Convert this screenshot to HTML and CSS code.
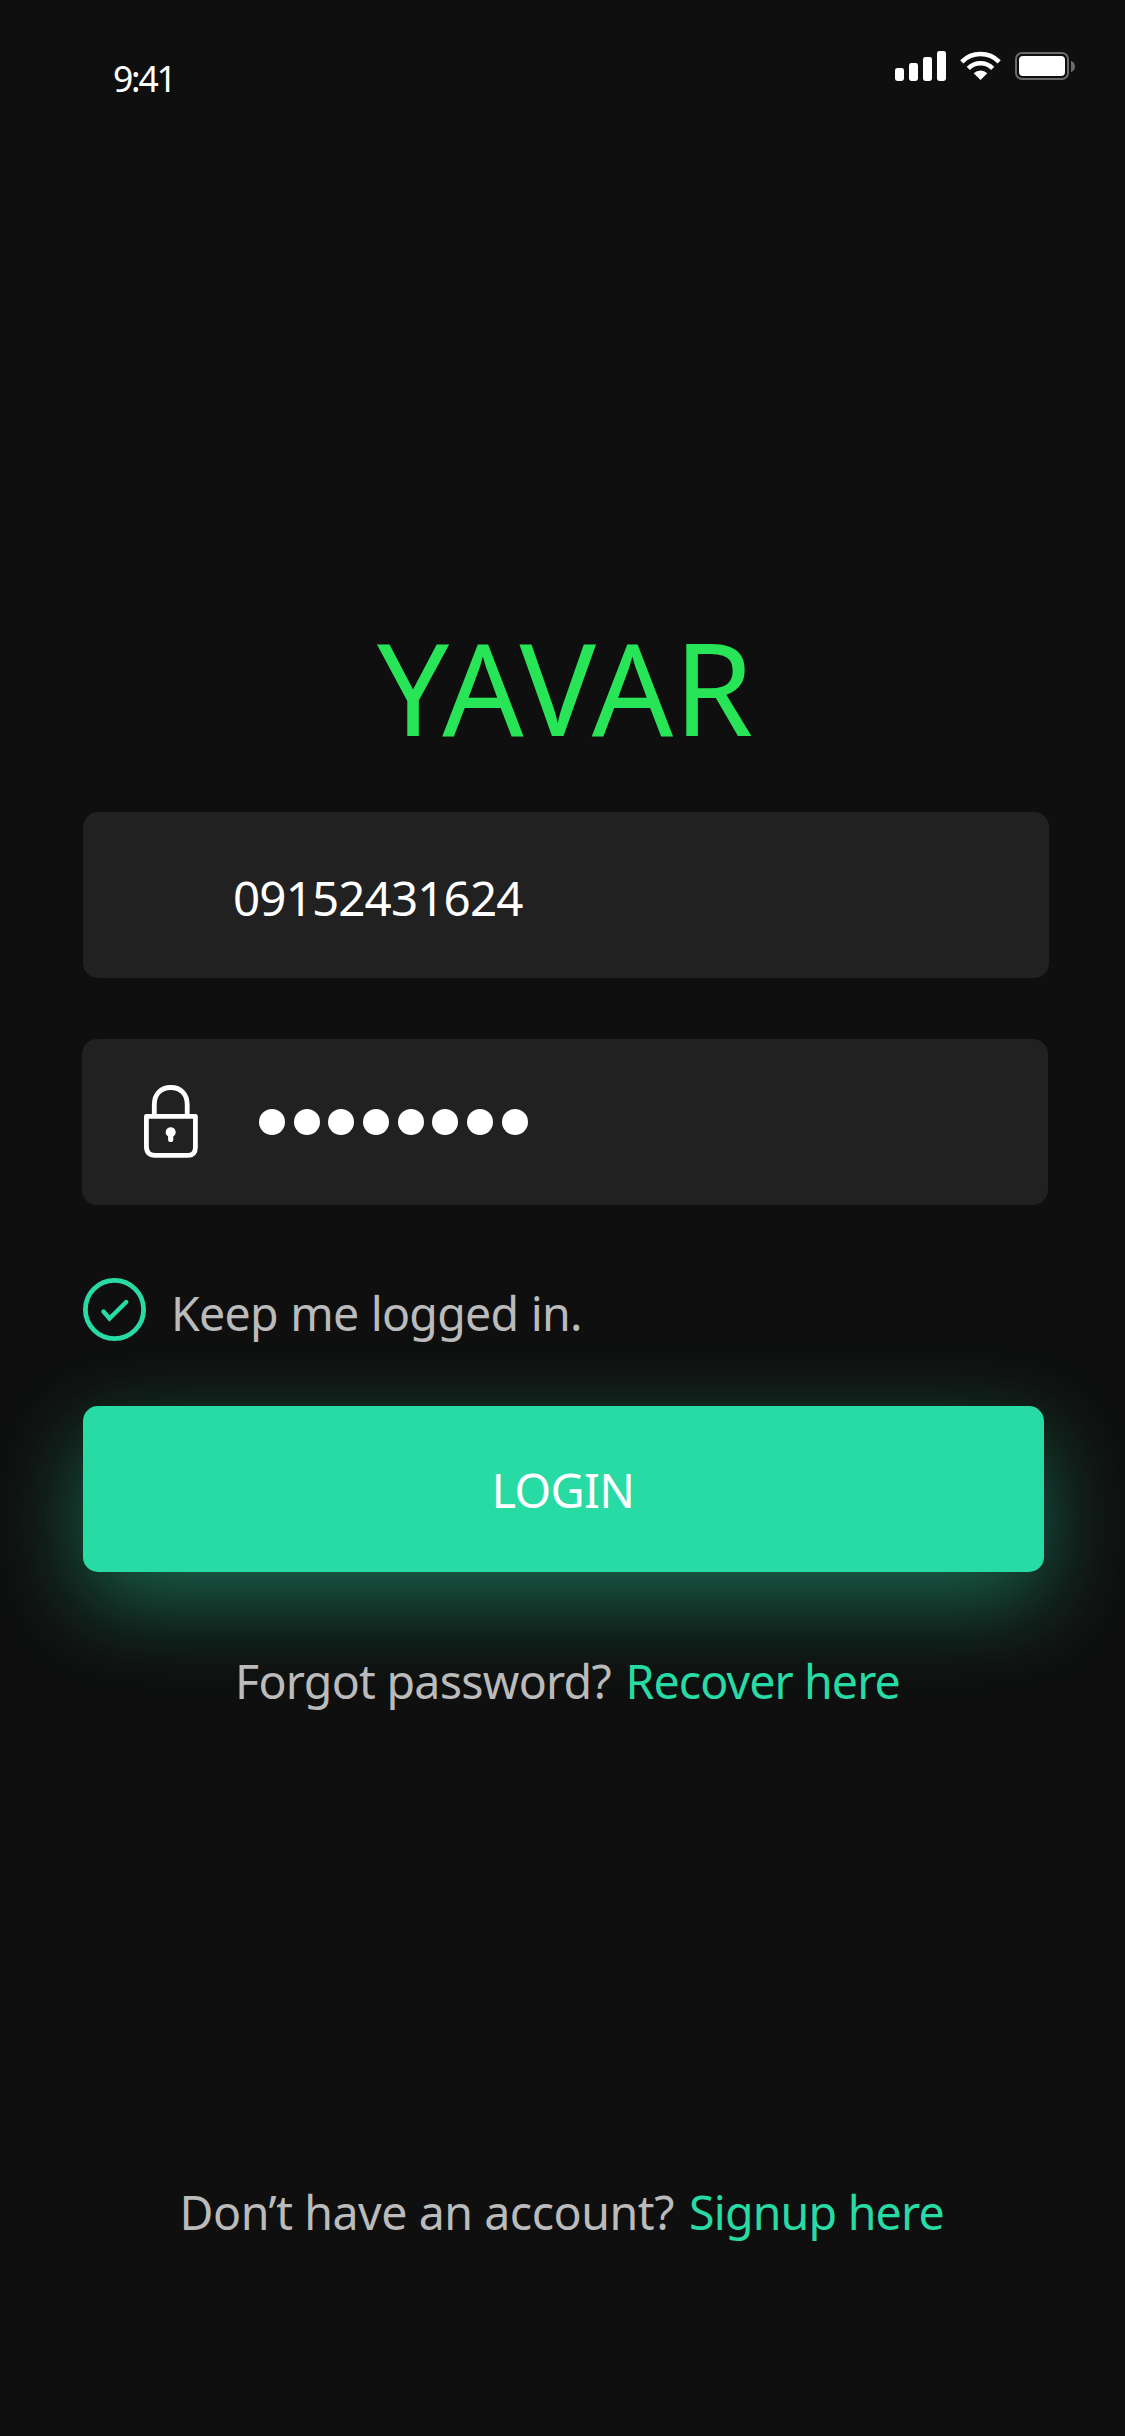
FILE: index.html
```html
<!DOCTYPE html>
<html lang="en">
<head>
<meta charset="utf-8">
<title>Yavar – Login</title>
<link rel="stylesheet" href="styles.css">
</head>
<body>
<div class="screen">
  <header class="status">
    <span class="time">9:41</span>
    <svg class="status-icons" width="181" height="30" viewBox="0 0 181 30" fill="#fff">
      <rect x="0" y="17" width="9" height="13" rx="2.4"/>
      <rect x="14" y="12" width="9" height="18" rx="2.4"/>
      <rect x="28" y="6" width="9" height="24" rx="2.4"/>
      <rect x="42" y="0" width="9" height="30" rx="2.4"/>
      <g fill="none" stroke="#fff" stroke-width="4.5">
        <path d="M66.8 10.8A26.4 26.4 0 0 1 104.2 10.8"/>
        <path d="M73.3 17.3A17.3 17.3 0 0 1 97.7 17.3"/>
      </g>
      <path d="M78.7 22.3A9.8 9.8 0 0 1 92.3 22.3L85.5 29Z"/>
      <rect x="121" y="2" width="52" height="26" rx="6" fill="none" stroke="#6b6b6b" stroke-width="2"/>
      <rect x="124" y="5" width="46" height="20" rx="4"/>
      <path d="M176 10C178.600 10.700 180 12.700 180 15.500S178.600 20.300 176 21Z" fill="#6b6b6b"/>
    </svg>
  </header>

  <main class="content">
    <h1 class="brand">YAVAR</h1>

    <div class="field phone"><span class="number">09152431624</span></div>

    <div class="field password">
      <svg class="lock" width="54" height="73" viewBox="0 0 54 73" fill="none" stroke="#fff" stroke-width="4.800">
        <path d="M10.300 31V19.500C10.300 9 16.800 2.500 26.800 2.500S43.200 9 43.200 19.500V31"/>
        <path d="M2.400 31.300H51.400V62.500Q51.400 70.400 43.500 70.400H11Q2.400 70.400 2.400 61.500Z" stroke-linejoin="round"/>
        <path d="M26.700 42.200A4.900 4.900 0 0 1 29.300 51.300V54.500A2.600 2.600 0 0 1 24.100 54.500V51.300A4.900 4.900 0 0 1 26.700 42.200Z" fill="#fff" stroke="none"/>
      </svg>
      <div class="dots"><i></i><i></i><i></i><i></i><i></i><i></i><i></i><i></i></div>
    </div>

    <div class="keep">
      <svg width="63" height="63" viewBox="0 0 63 63" fill="none" stroke="#28daa3">
        <circle cx="31.500" cy="31.500" r="29.100" stroke-width="4.800"/>
        <path d="M20.500 33.500L26.500 40.600L43.200 24" stroke-width="4.400" stroke-linecap="round"/>
      </svg>
      <span class="keep-label">Keep me logged in.</span>
    </div>

    <button class="login">LOGIN</button>
    <p class="line forgot"><span class="ask">Forgot password?</span><a class="link">Recover here</a></p>
  </main>

  <footer class="line signup"><span class="ask">Don’t have an account?</span><a class="link">Signup here</a></footer>
</div>
</body>
</html>
```
FILE: styles.css
```css
* { box-sizing: border-box; margin: 0; padding: 0; }

body {
  background: #0f0f0f;
  color: #fff;
  font-family: "Noto Sans", "Open Sans", sans-serif;
}

.screen {
  width: 1125px;
  height: 2436px;
  display: flex;
  flex-direction: column;
  overflow: hidden;
}

.status {
  height: 130px;
  display: flex;
  justify-content: space-between;
  align-items: flex-start;
  padding: 51px 49px 0 113px;
}

.time {
  margin-top: 3px;
  font-size: 35.5px;
  line-height: 48px;
  letter-spacing: -2.2px;
}

.content {
  display: flex;
  flex-direction: column;
  padding: 493px 0 0 83px;
}

.brand {
  height: 128px;
  margin: 0 0 61px 294px;
  color: #28e557;
  font-size: 127.4px;
  font-weight: 400;
  line-height: 128px;
  letter-spacing: 0.87px;
}

.field {
  width: 966px;
  height: 166px;
  border-radius: 15px;
  background: #212121;
  display: flex;
  align-items: center;
}

.phone { padding: 6px 0 0 150px; }

.number {
  font-size: 47.5px;
  line-height: 64px;
  letter-spacing: -0.85px;
}

.password {
  margin: 61px 0 0 -1px;
  padding-left: 62px;
}

.lock {
  display: block;
  margin-bottom: 2px;
}

.dots {
  display: flex;
  gap: 8.7px;
  margin-left: 61px;
}

.dots i {
  width: 26px;
  height: 26px;
  border-radius: 50%;
  background: #fff;
}

.keep {
  height: 63px;
  margin-top: 73px;
  display: flex;
  align-items: center;
  gap: 25px;
  color: #bbb;
}

.keep-label {
  padding-top: 7px;
  font-size: 46.5px;
  line-height: 64px;
  letter-spacing: -0.75px;
  word-spacing: 1px;
}

.login {
  width: 961px;
  height: 166px;
  margin-top: 65px;
  padding: 1px 1px 0 0;
  border: 0;
  border-radius: 15px;
  background: #28daa3;
  box-shadow: 0 30px 90px rgba(40, 218, 163, 0.43);
  color: #fff;
  font: 47px/64px "Noto Sans", "Open Sans", sans-serif;
  letter-spacing: -0.7px;
}

.line {
  display: flex;
  font-size: 46.5px;
  line-height: 64px;
  color: #bbb;
  white-space: nowrap;
}

.link { color: #28daa3; }

.forgot {
  position: relative;
  margin: 77px 0 0 152px;
  gap: 14.5px;
}

.forgot .ask { letter-spacing: -0.73px; }
.forgot .link { letter-spacing: -0.9px; }

.signup {
  margin: 467px 0 0 179.5px;
  gap: 15px;
}

.signup .ask { letter-spacing: -0.45px; }
.signup .link { letter-spacing: -0.8px; }
```
